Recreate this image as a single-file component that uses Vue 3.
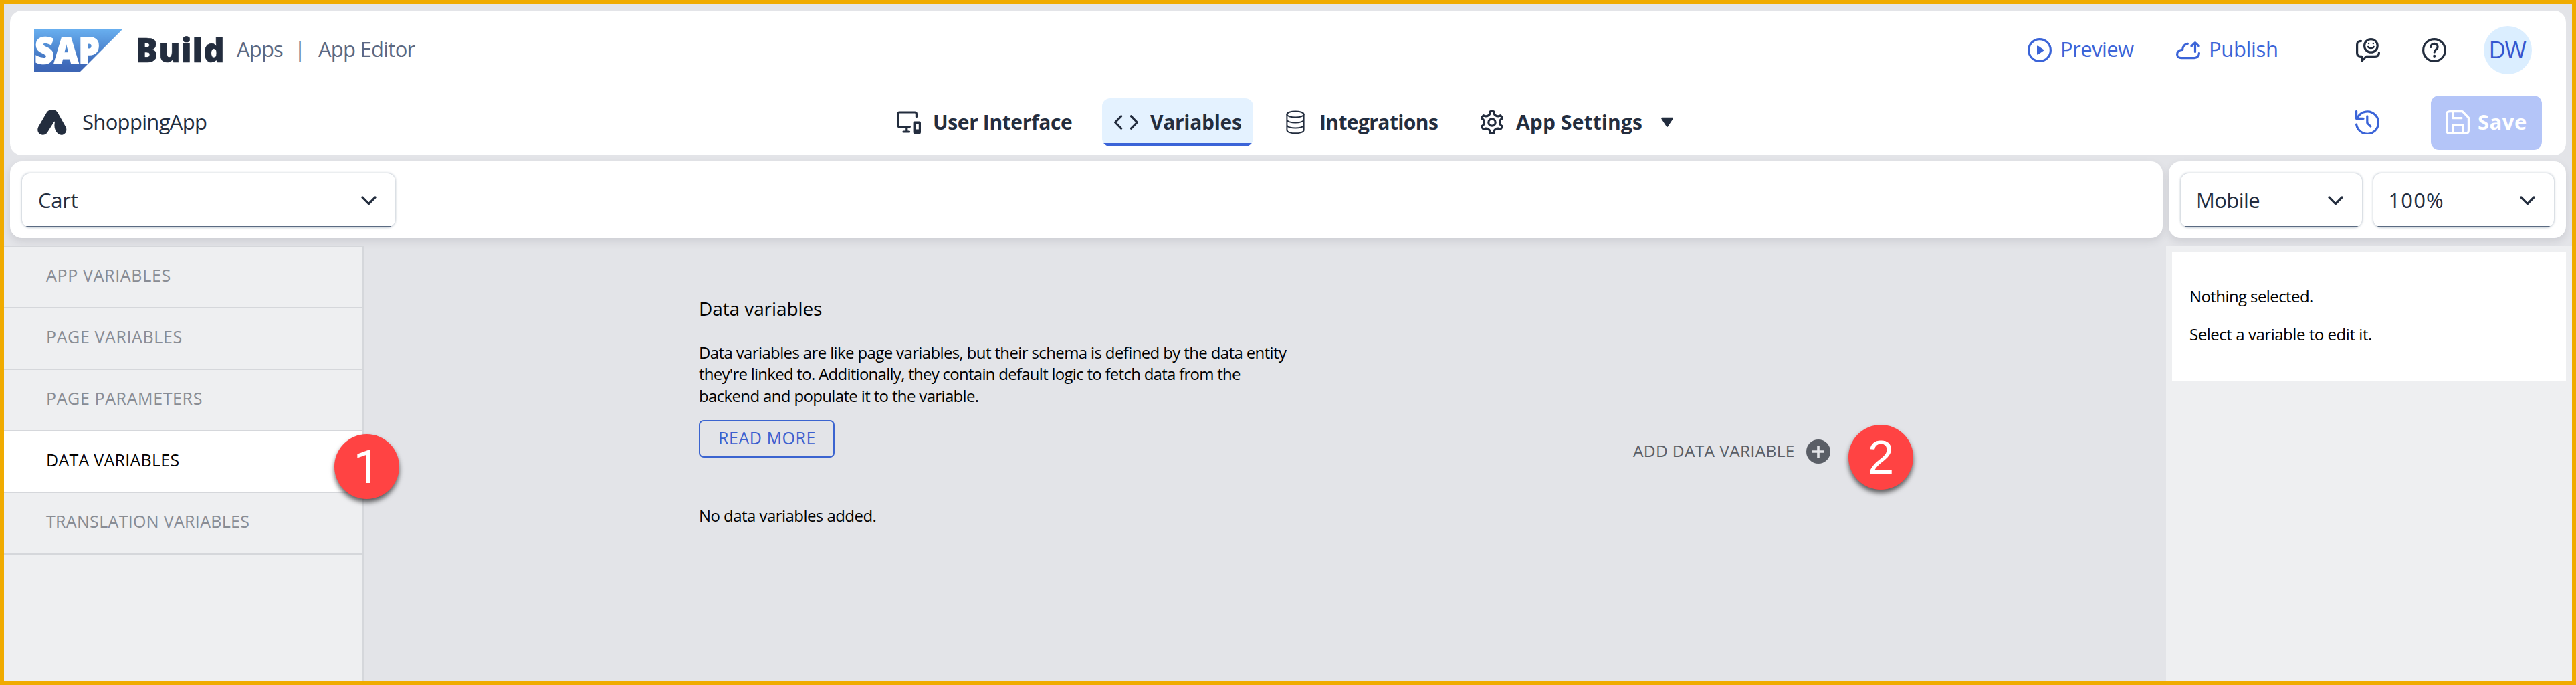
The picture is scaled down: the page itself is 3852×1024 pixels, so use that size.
<script setup>
const items = [
  { label: 'APP VARIABLES', cls: 'ls-a' },
  { label: 'PAGE VARIABLES', cls: 'ls-b' },
  { label: 'PAGE PARAMETERS', cls: 'ls-b' },
  { label: 'DATA VARIABLES', cls: 'ls-c active' },
  { label: 'TRANSLATION VARIABLES', cls: 'ls-d' }
]

// Six-toothed gear outline centred on 18,18
const point = (deg, r) => {
  const a = ((deg - 90) * Math.PI) / 180
  return `${(18 + r * Math.cos(a)).toFixed(2)} ${(18 + r * Math.sin(a)).toFixed(2)}`
}
let gear = `M${point(-9, 16.4)}`
for (let k = 0; k < 6; k++) {
  const a = k * 60
  gear += `Q${point(a, 17)} ${point(a + 9, 16.4)}L${point(a + 13, 13.4)}Q${point(a + 30, 10.2)} ${point(a + 47, 13.4)}L${point(a + 51, 16.4)}`
}
gear += 'Z'
</script>

<template>
  <div class="app">
    <header class="header">
      <div class="row top">
        <svg class="sap" width="133" height="65" viewBox="0 0 133 65">
          <defs>
            <linearGradient id="sapFill" x1="0" y1="0" x2="0" y2="1">
              <stop offset="0" stop-color="#69b0f0" />
              <stop offset="0.55" stop-color="#4a80cb" />
              <stop offset="0.85" stop-color="#3e68b8" />
              <stop offset="1" stop-color="#3c65b4" />
            </linearGradient>
          </defs>
          <path d="M0 0H133L68 65H0Z" fill="url(#sapFill)" />
          <text class="sap-text" x="1" y="52" textLength="97" lengthAdjust="spacingAndGlyphs">SAP</text>
        </svg>
        <span class="build">Build</span>
        <span class="crumb apps">Apps</span>
        <span class="crumb pipe">|</span>
        <span class="crumb editor">App Editor</span>
        <div class="actions">
          <button class="link preview">
            <svg class="ico" viewBox="0 0 36 36">
              <circle cx="18" cy="18" r="16.4" />
              <path d="M15 12.2V23.8L23.4 18Z" fill="currentColor" stroke-width="2" />
            </svg>
            <span>Preview</span>
          </button>
          <button class="link publish">
            <svg class="ico" viewBox="0 0 36 36">
              <path d="M17.3 8.4C12.3 9.4 9.8 12.6 9.6 17.4C4.6 17.6 1.6 20.4 1.6 24.2C1.6 27.6 4.2 29.6 7.6 29.6H27.2C31.4 29.6 34.2 26.8 34.4 22.4" />
              <path d="M28.5 20.6V7M23 12L28.5 6.6L34 12" />
            </svg>
            <span>Publish</span>
          </button>
          <svg class="ico dark feedback" viewBox="0 0 36 36">
            <circle cx="22.4" cy="11.4" r="9.8" />
            <path d="M18.2 13C19.4 15.6 25.4 15.6 26.6 13" stroke-width="2.6" />
            <path d="M19 8h.1M25.8 8h.1" stroke-width="2.4" />
            <path d="M7.6 4.4C3.6 4.6 1.6 6.4 1.6 10V22C1.6 25.6 3.4 27.4 7 27.4H8.6V34L15.4 27.4H28.6C32.4 27.4 34.4 25.4 34.4 21.8" />
          </svg>
          <svg class="ico dark help" viewBox="0 0 36 36">
            <circle cx="18" cy="18" r="16.4" />
            <path d="M12.8 13.4C12.8 6.8 23.2 6.6 23.2 13.2C23.2 17.2 18.2 17 18.2 21" />
            <circle cx="18.2" cy="26.8" r="2.1" fill="currentColor" stroke="none" />
          </svg>
          <div class="avatar"><span>DW</span></div>
        </div>
      </div>

      <div class="row bottom">
        <div class="project">
          <svg class="mark" width="44" height="38" viewBox="0 0 44 38">
            <path d="M14 4C17.4 -1.3 26.6 -1.3 30 4L42.4 26C46.4 34 37 41.6 30.4 35.6C25.6 30.8 24.6 25 26 18.6L25.2 17.6L14.6 34.6C8.4 41.8 -3 35.6 1.2 26Z" fill="#232d3e" />
          </svg>
          <span>ShoppingApp</span>
        </div>
        <nav class="tabs">
          <a class="tab ui">
            <svg class="ico dark" viewBox="0 0 36 36">
              <path d="M29.4 9.8V5.2Q29.4 3 27 3H4Q1.5 3 1.5 5.4V22.2Q1.5 24.6 4 24.6H19.4M14.8 24.6V32M10 32H18.6" />
              <path fill="currentColor" stroke="none" fill-rule="evenodd" d="M26.4 16.6H33.8Q36 16.6 36 18.8V33Q36 35.2 33.8 35.2H26.8Q24.6 35.2 24.6 33V18.8Q24.6 16.6 26.4 16.6ZM28 20V28.6H32.8V20Z" />
            </svg>
            <span>User Interface</span>
          </a>
          <a class="tab variables">
            <svg class="ico dark" viewBox="0 0 36 36">
              <path d="M10.6 8.8L1.6 18L10.6 27.2M25.4 8.8L34.4 18L25.4 27.2" />
            </svg>
            <span>Variables</span>
          </a>
          <a class="tab integrations">
            <svg class="ico dark thin" viewBox="0 0 36 36">
              <ellipse cx="18" cy="6" rx="12.6" ry="4.6" />
              <path d="M5.400 6V29.4C5.4 36 30.6 36 30.6 29.4V6M5.4 14C5.4 20 30.6 20 30.6 14M5.4 22C5.4 28 30.6 28 30.6 22" />
            </svg>
            <span>Integrations</span>
          </a>
          <a class="tab settings">
            <svg class="ico dark" viewBox="0 0 36 36">
              <path :d="gear" />
              <circle cx="18" cy="18" r="5.2" />
            </svg>
            <span>App Settings</span>
            <svg class="caret" width="20" height="16" viewBox="0 0 20 16">
              <path d="M2.4 2H17.6L10 13.6Z" fill="#232d3e" stroke="#232d3e" stroke-width="2.6" stroke-linejoin="round" />
            </svg>
          </a>
        </nav>
        <div class="tools">
          <svg class="ico history" viewBox="0 0 36 36">
            <path d="M1.6 21.2A16.6 16.6 0 1 0 3.4 10.6M1.6 1.5V12.4H12" />
            <path d="M17.8 8.8V18.8L22.8 24" />
          </svg>
          <button class="save">
            <svg class="ico" viewBox="0 0 36 36">
              <path d="M6 1.6H25.2L34.4 11.2V30Q34.4 34.4 30 34.4H6Q1.6 34.4 1.6 30V6Q1.6 1.6 6 1.6Z" />
              <path d="M10.6 2V11.6H24M10.6 34V21.8H25.6V34" />
            </svg>
            <span>Save</span>
          </button>
        </div>
      </div>
    </header>

    <div class="toolbar">
      <div class="panel left">
        <div class="select page">
          <span class="cart">Cart</span>
          <svg class="chev" viewBox="0 0 23 14"><path d="M2 2L11.5 11.6L21 2" /></svg>
        </div>
      </div>
      <div class="panel right">
        <div class="select">
          <span class="mobile">Mobile</span>
          <svg class="chev" viewBox="0 0 23 14"><path d="M2 2L11.5 11.6L21 2" /></svg>
        </div>
        <div class="select">
          <span class="zoom">100%</span>
          <svg class="chev" viewBox="0 0 23 14"><path d="M2 2L11.5 11.6L21 2" /></svg>
        </div>
      </div>
    </div>

    <div class="body">
      <aside class="sidebar">
        <div v-for="i in items" :key="i.label" class="item" :class="i.cls">{{ i.label }}</div>
      </aside>
      <main class="main">
        <section class="intro">
          <h1>Data variables</h1>
          <p class="desc">
            <span class="l1">Data variables are like page variables, but their schema is defined by the data entity</span><br>
            <span class="l2">they're linked to. Additionally, they contain default logic to fetch data from the</span><br>
            <span class="l3">backend and populate it to the variable.</span>
          </p>
          <button class="more">READ MORE</button>
          <p class="empty">No data variables added.</p>
        </section>
        <div class="add">
          <span>ADD DATA VARIABLE</span>
          <svg width="36" height="36" viewBox="0 0 36 36">
            <circle cx="18" cy="18" r="18" fill="#5a5e66" />
            <path d="M18 9V27M9 18H27" stroke="#e3e4e8" stroke-width="3.6" />
          </svg>
        </div>
      </main>
      <aside class="inspector">
        <div class="card">
          <p class="n1">Nothing selected.</p>
          <p class="n2">Select a variable to edit it.</p>
        </div>
      </aside>
      <div class="badge one">1</div>
      <div class="badge two">2</div>
    </div>
  </div>
</template>

<style>
body { margin: 0; }
</style>

<style scoped>
.app {
  box-sizing: border-box;
  width: 3852px;
  height: 1024px;
  border: 6px solid #f0ab00;
  background: #e3e4e8;
  display: flex;
  flex-direction: column;
  overflow: hidden;
  font-family: "Open Sans", "Noto Sans", sans-serif;
  color: #232d3e;
  white-space: nowrap;
}
button { font: inherit; border: 0; background: none; padding: 0; margin: 0; }
.ico {
  width: 36px;
  height: 36px;
  flex: none;
  fill: none;
  stroke: currentColor;
  stroke-width: 3.2;
  stroke-linecap: round;
  stroke-linejoin: round;
}
.dark { color: #232d3e; }
.thin { stroke-width: 2; }

.header {
  flex: none;
  height: 216px;
  margin: 10px 9px 0;
  background: #fff;
  border-radius: 18px;
}
.row { display: flex; align-items: center; box-sizing: border-box; }
.top { height: 118px; padding: 0 51px 0 36px; }
.bottom { height: 98px; padding: 0 36px 0 41px; }
.sap { flex: none; overflow: visible; }
.sap-text { font: 800 54px "Open Sans", sans-serif; fill: #fff; stroke: #fff; stroke-width: 1.6; }
.build {
  width: 145px;
  margin-left: 19px;
  font-size: 49px;
  font-weight: 800;
  letter-spacing: 0.9px;
  -webkit-text-stroke: 0.6px #232d3e;
  padding-bottom: 2px;
}
.crumb { font-size: 31px; color: #5b6882; padding-bottom: 4px; }
.apps { width: 86px; margin-left: 6px; letter-spacing: -0.84px; }
.pipe { width: 36px; }
.editor { letter-spacing: -0.75px; }
.actions { margin-left: auto; display: flex; align-items: center; }
.link { display: flex; align-items: center; color: #3b64d8; font-size: 31px; }
.link span { padding-bottom: 4px; margin-left: 13px; }
.preview { width: 222px; letter-spacing: -0.57px; }
.publish { width: 269px; letter-spacing: -0.34px; }
.help { margin: 0 56px 0 63px; }
.avatar {
  width: 72px;
  height: 72px;
  border-radius: 50%;
  background: #dbeeff;
  color: #3556cf;
  font-size: 35px;
  letter-spacing: -1.4px;
  display: flex;
  align-items: center;
  justify-content: center;
}
.avatar span { padding-bottom: 3px; margin-left: -2px; }

.project { width: 1267px; display: flex; align-items: center; font-size: 31px; letter-spacing: -0.68px; }
.project span { margin-left: 23px; padding-bottom: 2px; }
.tabs { display: flex; gap: 28px; }
.tab {
  box-sizing: border-box;
  height: 72px;
  padding: 0 18px;
  display: flex;
  align-items: center;
  font-size: 30px;
  font-weight: 700;
  border-radius: 12px;
}
.tab span { margin-left: 18px; padding-bottom: 2px; }
.ui { width: 297px; letter-spacing: -0.38px; }
.variables {
  width: 226px;
  letter-spacing: -0.3px;
  background: linear-gradient(#e4f2ff 67px, #3b64d8 67px);
}
.integrations { width: 265px; letter-spacing: -0.6px; }
.integrations .ico { margin-left: -1px; }
.settings { letter-spacing: 0.13px; }
.caret { margin-left: 27px; }
.tools { margin-left: auto; display: flex; align-items: center; }
.history { color: #3b64d8; margin-right: 77px; }
.save {
  box-sizing: border-box;
  width: 166px;
  height: 81px;
  padding-left: 22px;
  border-radius: 12px;
  background: #b4c5f8;
  color: #fff;
  display: flex;
  align-items: center;
  font-size: 31px;
  font-weight: 700;
  letter-spacing: 0.52px;
}
.save span { margin-left: 12px; padding-bottom: 2px; }

.toolbar { flex: none; display: flex; gap: 9px; height: 115px; margin: 9px 9px 0; }
.panel {
  box-sizing: border-box;
  background: #fff;
  border-radius: 18px;
  padding: 18px 18px 0;
  display: flex;
  gap: 17px;
  box-shadow: 0 5px 12px rgba(60, 64, 75, 0.13);
}
.left { flex: 1; }
.right { width: 594px; }
.select {
  box-sizing: border-box;
  width: 271px;
  height: 81px;
  padding: 0 28px 0 23px;
  border-radius: 12px;
  background: linear-gradient(transparent 79px, #5b6b82 79px);
  box-shadow: 0 0 3px 1px rgba(85, 107, 130, 0.32);
  display: flex;
  align-items: center;
  justify-content: space-between;
  font-size: 31px;
}
.select span { padding-bottom: 1px; }
.page { width: 558px; padding-left: 24px; }
.cart { letter-spacing: -0.2px; }
.mobile { letter-spacing: -0.6px; }
.zoom { letter-spacing: 1.1px; }
.chev {
  width: 23px;
  height: 14px;
  fill: none;
  stroke: #232d3e;
  stroke-width: 3.4;
  stroke-linecap: round;
  stroke-linejoin: round;
}

.body { position: relative; flex: 1; margin-top: 11px; display: flex; }
.sidebar {
  box-sizing: border-box;
  width: 538px;
  background: #eeeff1;
  border-top: 2px solid #d5d7db;
  border-right: 2px solid #d5d7db;
}
.item {
  box-sizing: border-box;
  height: 92px;
  padding: 0 0 5px 63px;
  border-bottom: 2px solid #d5d7db;
  font-size: 25px;
  line-height: 85px;
  color: #888c94;
}
.active { background: #fff; color: #000; }
.ls-a { letter-spacing: 0.67px; }
.ls-b { letter-spacing: 0.62px; }
.ls-c { letter-spacing: 0.26px; }
.ls-d { letter-spacing: 0.32px; }

.main { flex: 1; display: flex; padding: 75px 0 0 501px; color: #000; }
.intro { width: 1397px; display: flex; flex-direction: column; align-items: flex-start; font-size: 24px; }
h1 { margin: 0 0 31px; font-size: 28px; font-weight: 400; line-height: 38px; letter-spacing: -0.09px; }
p { margin: 0; }
.desc { line-height: 32.4px; margin-bottom: 20px; }
.l1 { letter-spacing: -0.63px; }
.l2 { letter-spacing: -0.73px; }
.l3 { letter-spacing: -0.65px; }
.more {
  box-sizing: border-box;
  width: 203px;
  height: 56px;
  padding: 0 0 4px 1px;
  border: 2px solid #3b64d0;
  border-radius: 7px;
  color: #3b5fcf;
  font-size: 25px;
  line-height: 34px;
  letter-spacing: 0.55px;
}
.empty { margin-top: 71px; line-height: 32px; letter-spacing: -0.55px; }
.add {
  height: 36px;
  margin-top: 215px;
  display: flex;
  align-items: center;
  font-size: 24.5px;
  letter-spacing: 0.35px;
  color: #5a5e66;
}
.add span { width: 259px; padding-bottom: 4px; }

.inspector { width: 607px; box-sizing: border-box; padding: 9px 9px 0; background: #eeeff1; }
.card {
  box-sizing: border-box;
  height: 193px;
  padding: 50px 0 0 26px;
  background: #fff;
  color: #000;
  font-size: 24px;
  line-height: 34px;
}
.n1 { margin-bottom: 23px; letter-spacing: -0.59px; }
.n2 { letter-spacing: -0.46px; }

.badge {
  position: absolute;
  width: 97px;
  height: 97px;
  border-radius: 50%;
  background: #ff4343;
  box-shadow: 0 5px 7px rgba(0, 0, 0, 0.6);
  color: #fff;
  font: 71px/97px "Liberation Sans", Arial, sans-serif;
  text-align: center;
}
.one { left: 494px; top: 282px; font-family: Roboto, sans-serif; }
.two { left: 2758px; top: 268px; }
</style>
